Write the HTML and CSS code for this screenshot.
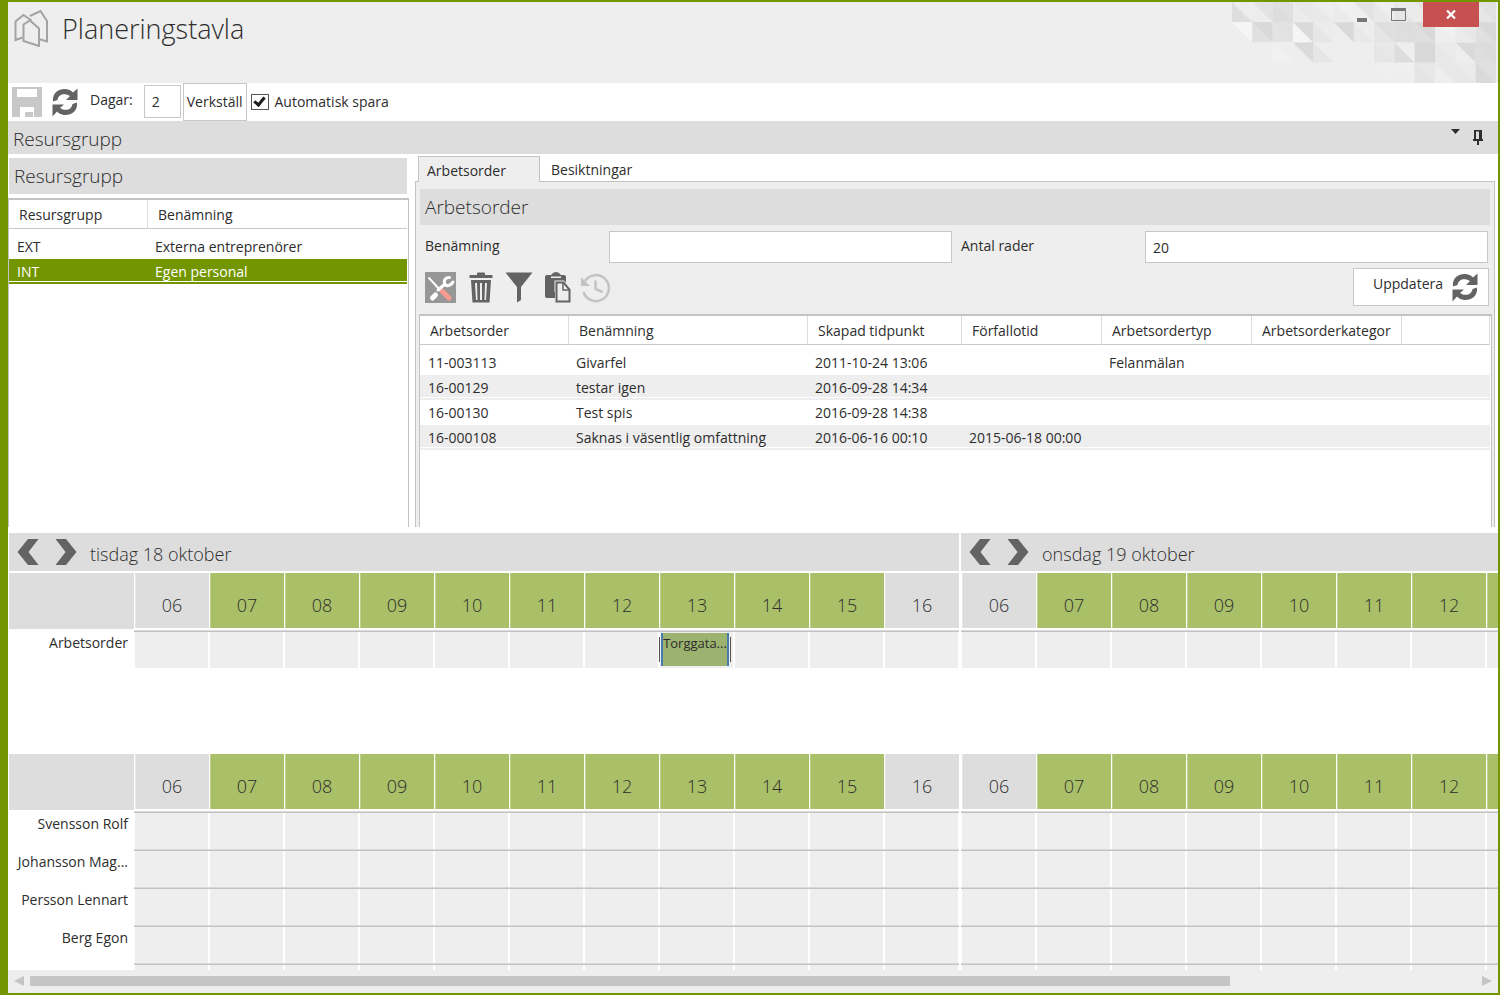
FILE: index.html
```html
<!DOCTYPE html>
<html lang="sv">
<head>
    <meta charset="UTF-8">
    <meta name="viewport" content="width=device-width, initial-scale=1.0">
    <title>Planeringstavla</title>
    <link rel="stylesheet" href="styles.css">
</head>
<body>
    <svg class="symbols" width="0" height="0" aria-hidden="true">
        <symbol id="icon-refresh" viewBox="0 0 28 30">
            <path d="M2 14.500C1 6 7.500 2 13.500 2c4 0 6.500 1.500 8.500 3.500L26.500 1.500V13H15l4-4C13.500 5.500 7.500 7 6.500 13z"/>
            <path d="M26 15.500c1 8.500-5.500 12.500-11.500 12.500-4 0-6.500-1.500-8.500-3.500L1.500 29.500V17.500H13l-4 3.500c5.500 3.500 11.500 2 12.500-4z"/>
        </symbol>
        <symbol id="icon-prev" viewBox="0 0 22 26">
            <path d="M11 0h10.500L11.500 13l10 13H11L0.500 13z"/>
        </symbol>
        <symbol id="icon-next" viewBox="0 0 22 26">
            <path d="M0.500 0H11l10.500 13L11 26H0.500l10-13z"/>
        </symbol>
    </svg>

    <div class="window">
        <header class="titlebar">
            <svg class="pattern" id="pattern" width="264" height="81" viewBox="0 0 260 80" preserveAspectRatio="none"></svg>
            <svg class="logo" width="36" height="38" viewBox="0 0 36 38" fill="none" stroke="#a3a3a3" stroke-width="2">
                <path d="M9.500 28.500L2.500 31V12.500L10.500 6l8 5.500"/>
                <path d="M17 7L27.500 2L34 12V32.500L26 30"/>
                <path d="M10.500 15.500l6.500-4 9 8V37L10.500 32z"/>
            </svg>
            <h1>Planeringstavla</h1>
            <div class="window-buttons">
                <button class="win-btn" aria-label="Minimera">
                    <svg width="10" height="4"><rect width="10" height="4" fill="#777"/></svg>
                </button>
                <button class="win-btn" aria-label="Maximera">
                    <svg width="15" height="13"><path d="M.5 1v11.500h14V1z" fill="none" stroke="#777"/><rect width="15" height="3" fill="#777"/></svg>
                </button>
                <button class="win-btn win-close" aria-label="Stäng">
                    <svg width="10" height="9"><path d="M1 .5l8 8M9 .5l-8 8" stroke="#fff" stroke-width="2.200"/></svg>
                </button>
            </div>
        </header>

        <div class="toolbar">
            <button class="icon-btn" aria-label="Spara" disabled>
                <svg width="30" height="30"><rect width="30" height="30" fill="#c8c8c8"/><path d="M5 2h20v8H5zM8 30V20h14v10h-1v-5h-8v5z" fill="#fff"/></svg>
            </button>
            <button class="icon-btn" aria-label="Ladda om">
                <svg width="28" height="30" fill="#636363"><use href="#icon-refresh"/></svg>
            </button>
            <label class="days-label" for="days">Dagar:</label>
            <input class="field days" type="text" id="days" value="2">
            <button class="btn">Verkställ</button>
            <label class="check"><input type="checkbox" checked> Automatisk spara</label>
        </div>

        <div class="dock-title">
            <h2>Resursgrupp</h2>
            <div class="dock-buttons">
                <button class="icon-btn" aria-label="Meny">
                    <svg width="9" height="5"><path d="M0 0h9L4.500 5z" fill="#2d2d2d"/></svg>
                </button>
                <button class="icon-btn pin" aria-label="Fäst">
                    <svg width="10" height="15" fill="#2d2d2d"><path d="M1 0h8v9h1v2H6v4H4v-4H0V9h1zM3 1.500V9h3V1.500z" fill-rule="evenodd"/></svg>
                </button>
            </div>
        </div>

        <main class="split">
            <section class="groups">
                <h2 class="section-title">Resursgrupp</h2>
                <div class="grid-box">
                    <table class="grid">
                        <colgroup><col class="col-group"><col></colgroup>
                        <thead>
                            <tr><th>Resursgrupp</th><th>Benämning</th></tr>
                        </thead>
                        <tbody>
                            <tr><td>EXT</td><td>Externa entreprenörer</td></tr>
                            <tr class="selected"><td>INT</td><td>Egen personal</td></tr>
                        </tbody>
                    </table>
                </div>
            </section>

            <section class="orders">
                <div class="tabs">
                    <button class="tab active">Arbetsorder</button>
                    <button class="tab">Besiktningar</button>
                </div>
                <div class="tab-panel">
                    <h2 class="section-title">Arbetsorder</h2>
                    <div class="form-row">
                        <label for="name">Benämning</label>
                        <input class="field" type="text" id="name">
                        <label for="rows">Antal rader</label>
                        <input class="field" type="text" id="rows" value="20">
                    </div>
                    <div class="actions">
                        <button class="icon-btn" aria-label="Verktyg">
                            <svg width="31" height="31" fill="none" stroke-linecap="round">
                                <rect width="31" height="31" fill="#979797"/>
                                <path d="M4 6l12 13" stroke="#fff" stroke-width="2"/>
                                <path d="M17 19l7 7" stroke="#f99a92" stroke-width="5"/>
                                <path d="M7.500 26l3-3" stroke="#fff" stroke-width="5"/>
                                <path d="M13 18l7-6" stroke="#fff" stroke-width="3"/>
                                <path d="M24.500 5.500c-3-.5-6 2-5 5.500.5 3 5 4.500 8.500-1" stroke="#fff" stroke-width="3"/>
                            </svg>
                        </button>
                        <button class="icon-btn" aria-label="Ta bort">
                            <svg width="24" height="31" fill="#636363"><path d="M8 3V1.500Q8 .5 9 .5h6q1 0 1 1V3h7.500v3H.5V3z"/><path d="M2 8h20l-1.500 22.500h-17zM6 11l1 17h1.500L8 11zM11 11v17h2V11zM16 11l-.5 17H17l1-17z" fill-rule="evenodd"/></svg>
                        </button>
                        <button class="icon-btn" aria-label="Filter">
                            <svg width="28" height="31" fill="#636363"><path d="M.5.500h27L16 15v13l-4 2.500V15z"/></svg>
                        </button>
                        <button class="icon-btn" aria-label="Klistra in">
                            <svg width="26" height="31"><path d="M2 3h4q2-3 5-3t5 3h3q2 0 2 2v20H2q-2 0-2-2V5q0-2 2-2z" fill="#636363"/><path d="M6 6V4.500h10V6z" fill="#eee"/><path d="M10.500 9.500h8l6.500 7v12.500H10.500z" fill="#eee" stroke="#eee" stroke-width="2"/><path d="M11.500 10.500h7l6 7v12H11.500z" fill="#eee" stroke="#636363" stroke-width="2"/><path d="M18 10.500V18h6.500" fill="none" stroke="#636363" stroke-width="1.500"/><path d="M0 20h10v6H2q-2 0-2-2z" fill="#636363"/></svg>
                        </button>
                        <button class="icon-btn" aria-label="Historik" disabled>
                            <svg width="31" height="31" fill="none" stroke="#c3c3c3"><path d="M5 9a13 13 0 1 1-1.500 11" stroke-width="2.500"/><path d="M15.500 8.500V17l7 3" stroke-width="2.500"/><path d="M1 5v9h9z" fill="#c3c3c3" stroke="none"/></svg>
                        </button>
                        <button class="btn update"><span>Uppdatera</span> <svg width="28" height="30" fill="#636363"><use href="#icon-refresh"/></svg></button>
                    </div>
                    <div class="grid-box">
                        <table class="grid">
                            <colgroup><col class="col-order"><col class="col-name"><col class="col-created"><col class="col-due"><col class="col-type"><col class="col-type"><col></colgroup>
                            <thead>
                                <tr><th>Arbetsorder</th><th>Benämning</th><th>Skapad tidpunkt</th><th>Förfallotid</th><th>Arbetsordertyp</th><th>Arbetsorderkategor</th><th></th></tr>
                            </thead>
                            <tbody>
                                <tr><td>11-003113</td><td>Givarfel</td><td>2011-10-24 13:06</td><td></td><td>Felanmälan</td><td></td><td></td></tr>
                                <tr class="alt"><td>16-00129</td><td>testar igen</td><td>2016-09-28 14:34</td><td></td><td></td><td></td><td></td></tr>
                                <tr><td>16-00130</td><td>Test spis</td><td>2016-09-28 14:38</td><td></td><td></td><td></td><td></td></tr>
                                <tr class="alt"><td>16-000108</td><td>Saknas i väsentlig omfattning</td><td>2016-06-16 00:10</td><td>2015-06-18 00:00</td><td></td><td></td><td></td></tr>
                            </tbody>
                        </table>
                    </div>
                </div>
            </section>
        </main>

        <section class="schedule">
            <div class="schedule-orders">
                <table class="board">
                    <thead>
                        <tr class="days-row">
                            <th colspan="12">
                                <div class="day">
                                    <button class="icon-btn" aria-label="Föregående dag"><svg width="22" height="26" fill="#636363"><use href="#icon-prev"/></svg></button>
                                    <button class="icon-btn" aria-label="Nästa dag"><svg width="22" height="26" fill="#636363"><use href="#icon-next"/></svg></button>
                                    <span>tisdag 18 oktober</span>
                                </div>
                            </th>
                            <td class="split-col"></td>
                            <th colspan="11">
                                <div class="day">
                                    <button class="icon-btn" aria-label="Föregående dag"><svg width="22" height="26" fill="#636363"><use href="#icon-prev"/></svg></button>
                                    <button class="icon-btn" aria-label="Nästa dag"><svg width="22" height="26" fill="#636363"><use href="#icon-next"/></svg></button>
                                    <span>onsdag 19 oktober</span>
                                </div>
                            </th>
                        </tr>
                        <tr class="hours"></tr>
                    </thead>
                    <tbody>
                        <tr class="slots" data-event="Torggata..." data-hour="13"><th>Arbetsorder</th></tr>
                    </tbody>
                </table>
            </div>
            <div class="schedule-staff">
                <table class="board">
                    <thead>
                        <tr class="hours"></tr>
                    </thead>
                    <tbody>
                        <tr class="slots"><th>Svensson Rolf</th></tr>
                        <tr class="slots"><th>Johansson Mag...</th></tr>
                        <tr class="slots"><th>Persson Lennart</th></tr>
                        <tr class="slots"><th>Berg Egon</th></tr>
                        <tr class="slots"><th></th></tr>
                    </tbody>
                </table>
            </div>
        </section>

        <div class="scrollbar">
            <button class="icon-btn" aria-label="Bläddra vänster"><svg width="10" height="10"><path d="M10 0v10L0 5z" fill="#c5c5c5"/></svg></button>
            <div class="track"><div class="thumb"></div></div>
            <button class="icon-btn" aria-label="Bläddra höger"><svg width="10" height="10"><path d="M0 0v10l10-5z" fill="#c5c5c5"/></svg></button>
        </div>
    </div>

    <script src="script.js"></script>
</body>
</html>
```

FILE: styles.css
```css
* {
    box-sizing: border-box;
}
body {
    font-family: 'Segoe UI', 'Open Sans', 'Noto Sans', sans-serif;
    font-size: 14px;
    line-height: 20px;
    color: #2d2d2d;
    background: white;
    margin: 0;
}
h1, h2 {
    font-weight: 300;
    margin: 0;
}
h2 {
    font-size: 19px;
    line-height: 26px;
}
button, input {
    font: inherit;
    color: inherit;
}
button {
    background: none;
    border: none;
    padding: 0;
}
svg {
    display: block;
}
.symbols {
    position: absolute;
}
.window {
    display: flex;
    flex-direction: column;
    height: 100vh;
    border: 2px solid #739600;
    border-left-width: 8px;
    overflow: hidden;
}

/* Title bar */
.titlebar {
    position: relative;
    display: flex;
    align-items: flex-start;
    flex: none;
    height: 81px;
    padding: 7px 0 0 5px;
    background: #eee;
}
.pattern {
    position: absolute;
    top: 0;
    right: 2px;
}
h1 {
    font-size: 27px;
    line-height: 40px;
    margin-left: 13px;
}
.window-buttons {
    position: absolute;
    top: 0;
    right: 19px;
    display: flex;
}
.win-btn {
    display: flex;
    justify-content: center;
    align-items: center;
    width: 37px;
    height: 25px;
}
.win-btn:first-child {
    align-items: flex-end;
    padding-bottom: 5px;
}
.win-close {
    width: 56px;
    margin-left: 6px;
    background: #c75050;
}

/* Toolbar */
.toolbar {
    display: flex;
    align-items: center;
    flex: none;
    height: 38px;
    padding-left: 4px;
}
.toolbar .icon-btn + .icon-btn {
    margin-left: 9px;
}
.days-label {
    margin: 0 11px 4px 11px;
}
.field {
    height: 32px;
    min-width: 0;
    padding: 0 7px;
    background: white;
    border: 1px solid #c8c8c8;
    border-radius: 0;
}
.days {
    width: 37px;
    height: 33px;
    margin: 0 2px 2px 0;
}
.btn {
    height: 38px;
    padding: 0 3px;
    background: white;
    border: 1px solid #c8c8c8;
}
.check {
    display: flex;
    align-items: center;
    gap: 6px;
    margin-left: 4px;
}
.check input {
    appearance: none;
    width: 18px;
    height: 16px;
    margin: 0;
    border: 1px solid #555;
    background: white;
}
.check input:checked::before {
    content: "";
    display: block;
    box-sizing: content-box;
    width: 4px;
    height: 8px;
    margin: 0 auto;
    border: solid #1d1d1d;
    border-width: 0 3px 3px 0;
    transform: rotate(40deg);
}
.dock-title {
    display: flex;
    justify-content: space-between;
    flex: none;
    height: 33px;
    padding: 5px 15px 0 5px;
    background: #ddd;
}
.dock-buttons {
    display: flex;
    align-items: flex-start;
    gap: 13px;
    padding-top: 3px;
}
.pin {
    padding-top: 1px;
}

/* Upper part */
.split {
    display: flex;
    flex: 371 1 0;
    min-height: 0;
    padding: 2px 3px 6px 0;
}
.groups {
    display: flex;
    flex-direction: column;
    flex: none;
    width: 401px;
    margin-right: 6px;
    padding-top: 2px;
}
.section-title {
    flex: none;
    height: 36px;
    padding: 5px;
    margin: 0 2px 4px 1px;
    background: #ddd;
}
.orders {
    display: flex;
    flex-direction: column;
    flex: 1;
    min-width: 0;
}
.tabs {
    display: flex;
    flex: none;
    height: 25px;
    padding-left: 3px;
}
.tab {
    padding: 2px 9px 0 8px;
    border: 1px solid transparent;
    text-align: left;
}
.tab + .tab {
    padding-left: 10px;
}
.tab.active {
    width: 122px;
    height: 26px;
    background: #eee;
    border-color: #c3c3c3;
    border-bottom: none;
    z-index: 1;
}
.tab-panel {
    display: flex;
    flex-direction: column;
    flex: 1;
    min-height: 0;
    padding: 7px 2px 0 3px;
    background: #eee;
    border: 1px solid #c3c3c3;
    border-bottom: none;
}
.form-row {
    display: grid;
    grid-template-columns: 175px 1fr 175px 1fr;
    column-gap: 9px;
    margin: 2px 4px 0 6px;
}
.form-row label {
    padding-top: 5px;
}
.actions {
    display: flex;
    align-items: center;
    gap: 13px;
    margin: 5px 3px 8px 6px;
}
.actions .icon-btn:nth-child(2), .actions .icon-btn:nth-child(3) {
    margin-right: -1px;
}
.actions .icon-btn:nth-child(5) {
    margin-left: -4px;
}
.update {
    display: flex;
    align-items: center;
    gap: 8px;
    margin-left: auto;
    padding: 0 9px 0 19px;
}
.update span {
    margin-bottom: 6px;
}
.grid-box {
    flex: 1;
    min-height: 0;
    background: white;
    border: 1px solid #c3c3c3;
    border-top-width: 2px;
    border-bottom: none;
    padding-right: 1px;
    overflow: hidden;
}
.grid {
    width: 100%;
    table-layout: fixed;
    border-collapse: separate;
    border-spacing: 0;
}
.col-group { width: 139px; }
.col-order { width: 149px; }
.col-name { width: 239px; }
.col-created { width: 154px; }
.col-due { width: 140px; }
.col-type { width: 150px; }
.grid th {
    height: 29px;
    padding: 1px 0 0 10px;
    font-weight: 400;
    text-align: left;
    white-space: nowrap;
    overflow: hidden;
    border-right: 1px solid #dcdcdc;
    border-bottom: 1px solid #c8c8c8;
}
.groups .grid th:last-child {
    border-right: none;
}
.grid tbody::before {
    content: "";
    display: block;
    height: 5px;
}
.grid td {
    height: 25px;
    padding: 1px 0 0 8px;
    white-space: nowrap;
}
.grid .alt td {
    background: linear-gradient(#eee 22px, white 22px, white 23px, #eee 23px);
}
.grid .selected td {
    color: white;
    background: linear-gradient(#739600 22px, white 22px, white 23px, #739600 23px);
}
.grid td + td {
    padding-left: 7px;
}

/* Schedule */
.schedule {
    display: flex;
    flex-direction: column;
    flex: 437 1 0;
    min-height: 0;
    padding-left: 1px;
    overflow: hidden;
}
.schedule-orders {
    flex: none;
    height: 221px;
}
.board {
    width: 1777px;
    table-layout: fixed;
    border-collapse: separate;
    border-spacing: 0;
}
.board th, .board td {
    padding: 0;
    font-weight: 400;
}
.days-row th {
    height: 40px;
    background: linear-gradient(#ddd 38px, white 38px);
}
.board .day {
    display: flex;
    align-items: center;
    gap: 16px;
    height: 40px;
    padding: 0 0 2px 8px;
    font-size: 18px;
    font-weight: 300;
}
.day span {
    margin: 4px 0 0 -3px;
}
.board .hours th {
    height: 57px;
    padding-top: 8px;
    font-size: 18px;
    font-weight: 300;
    border-left: 1px solid white;
    border-bottom: 2px solid white;
    background: #ddd;
    box-shadow: inset 1px 0 #e6e6e6;
}
.board .hours .label-col {
    border-left: none;
    border-bottom-width: 1px;
    box-shadow: none;
}
.board .hours .work {
    background: #a9c068;
    box-shadow: inset 1px 0 #bdcf8b;
}
.board .slots th {
    height: 38px;
    padding: 3px 6px 0 0;
    text-align: right;
    vertical-align: top;
    white-space: nowrap;
}
.slot {
    position: relative;
    background:
        linear-gradient(#d9d9d9 1px, #c3c3c3 1px) top / 100% 2px no-repeat,
        linear-gradient(90deg, white 1px, #eee 1px, #eee calc(100% - 1px), white calc(100% - 1px));
}
.event {
    position: absolute;
    top: 3px;
    left: 2px;
    width: 68px;
    height: 33px;
    font-size: 13px;
    text-align: center;
    white-space: nowrap;
    background: #9bb36f;
    border: solid #4a7bb0;
    border-width: 0 2px;
}
.event::before, .event::after {
    content: "";
    position: absolute;
    top: 4px;
    width: 1px;
    height: 25px;
    background: #555;
}
.event::before {
    left: -4px;
}
.event::after {
    right: -4px;
}

/* Horizontal scrollbar */
.scrollbar {
    display: flex;
    align-items: center;
    flex: none;
    gap: 6px;
    height: 23px;
    padding: 0 6px 2px;
    background: #eee;
}
.track {
    flex: 1;
}
.thumb {
    width: 83%;
    height: 10px;
    background: #c5c5c5;
    border-radius: 1px;
}
```

FILE: script.js
```js
const hours = ['06', '07', '08', '09', '10', '11', '12', '13', '14', '15', '16'];

// Header background, one entry per tile: [lower left, upper right]
const tiles = [
    [['#dedede', '#ededed'], ['#ededed', '#e3e3e3'], ['#dddddd', '#e0e0e0'], ['#ececec', '#e8e8e8'], ['#e9e9e9', '#eeeeee'], ['#ebebeb', '#f0f0f0'], ['#efefef', '#e3e3e3'], ['#e9e9e9', '#eeeeee'], ['#e5e5e5', '#ebebeb'], ['#ebebeb', '#e4e4e4'], ['#e8e8e8', '#eaeaea'], ['#e8e8e8', '#eaeaea'], ['#e7e7e7', '#e1e1e1']],
    [['#eeeeee', '#f5f5f5'], ['#e0e0e0', '#d9d9d9'], ['#e4e4e4', '#e2e2e2'], ['#f5f5f5', '#dadada'], ['#e6e6e6', '#ececec'], ['#eeeeee', '#d9d9d9'], ['#e9e9e9', '#ededed'], ['#e5e5e5', '#dfdfdf'], ['#dedede', '#dddddd'], ['#dfdfdf', '#d9d9d9'], ['#eeeeee', '#f1f1f1'], ['#ebebeb', '#e7e7e7'], ['#e0e0e0', '#d9d9d9']],
    [['#eeeeee', '#eeeeee'], ['#eeeeee', '#eeeeee'], ['#f1f1f1', '#eeeeee'], ['#eeeeee', '#dadada'], ['#e6e6e6', '#eeeeee'], ['#eeeeee', '#eeeeee'], ['#eeeeee', '#eeeeee'], ['#e5e5e5', '#e8e8e8'], ['#dddddd', '#eeeeee'], ['#d9d9d9', '#d8d8d8'], ['#e8e8e8', '#ebebeb'], ['#eeeeee', '#dadada'], ['#dedede', '#dcdcdc']],
    [['#eeeeee', '#eeeeee'], ['#eeeeee', '#eeeeee'], ['#eeeeee', '#eeeeee'], ['#eeeeee', '#eeeeee'], ['#eeeeee', '#eeeeee'], ['#eeeeee', '#eeeeee'], ['#eeeeee', '#eeeeee'], ['#eeeeee', '#efefef'], ['#eeeeee', '#f0f0f0'], ['#e4e4e4', '#e7e7e7'], ['#eeeeee', '#e9e9e9'], ['#e7e7e7', '#ebebeb'], ['#dadada', '#e0e0e0']]
];

function drawPattern() {
    let shapes = '';
    tiles.forEach((row, r) => {
        row.forEach(([lower, upper], c) => {
            const x = c * 20;
            const y = r * 20;
            shapes += `<rect x="${x}" y="${y}" width="20" height="20" fill="${lower}"/>`;
            shapes += `<path d="M${x} ${y}h20v20z" fill="${upper}"/>`;
        });
    });
    document.getElementById('pattern').innerHTML = shapes;
}

function addCell(row, tag, className, text) {
    const cell = document.createElement(tag);
    cell.className = className;
    cell.textContent = text || '';
    row.appendChild(cell);
    return cell;
}

// Two days side by side
function fillRow(row, addHour) {
    hours.forEach(hour => addHour(hour, 0));
    addCell(row, 'td', 'split-col');
    hours.forEach(hour => addHour(hour, 1));
}

// Only columns that fit in the window get their hour written out
function labelHours() {
    document.querySelectorAll('.hours [data-hour]').forEach(cell => {
        const fits = cell.getBoundingClientRect().right <= window.innerWidth;
        cell.textContent = fits ? cell.dataset.hour : '';
    });
}

// Fixed column widths for each board
document.querySelectorAll('.board').forEach(board => {
    const cols = '<col width="75">'.repeat(hours.length);
    board.insertAdjacentHTML('afterbegin', `<colgroup><col width="125">${cols}<col width="2">${cols}</colgroup>`);
});

document.querySelectorAll('.hours').forEach(row => {
    addCell(row, 'th', 'label-col');
    fillRow(row, hour => {
        const cell = addCell(row, 'th', hour > '06' && hour < '16' ? 'work' : '');
        cell.dataset.hour = hour;
    });
});

document.querySelectorAll('.slots').forEach(row => {
    fillRow(row, (hour, day) => {
        const cell = addCell(row, 'td', 'slot');
        if (day === 0 && row.dataset.event && row.dataset.hour === hour) {
            const event = document.createElement('div');
            event.className = 'event';
            event.textContent = row.dataset.event;
            cell.appendChild(event);
        }
    });
});

drawPattern();
labelHours();
window.addEventListener('resize', labelHours);
```
